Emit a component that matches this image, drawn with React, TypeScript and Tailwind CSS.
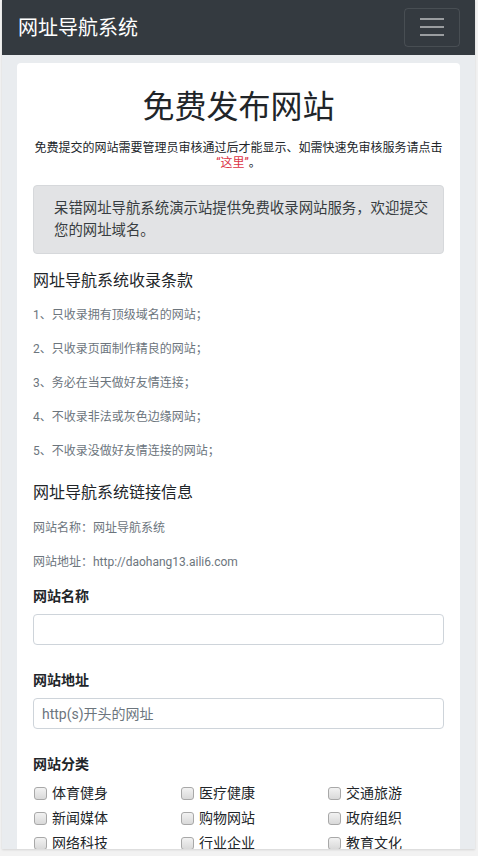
const rules = [
  "1、只收录拥有顶级域名的网站；",
  "2、只收录页面制作精良的网站；",
  "3、务必在当天做好友情连接；",
  "4、不收录非法或灰色边缘网站；",
  "5、不收录没做好友情连接的网站；",
];

const categories = [
  "体育健身",
  "医疗健康",
  "交通旅游",
  "新闻媒体",
  "购物网站",
  "政府组织",
  "网络科技",
  "行业企业",
  "教育文化",
];

function Checkbox({ label }: { label: string }) {
  return (
    <label className="w-1/3 px-[15px] flex items-center h-[21px] text-[14px] text-[#212529]">
      <span className="ml-[1px] w-[13px] h-[13px] rounded-[3px] border border-[#a8a8a8] bg-linear-to-b from-[#f2f2f2] to-[#d9d9d9]" />
      <span className="ml-[5px] leading-[21px]">{label}</span>
    </label>
  );
}

export default function App() {
  return (
    <div className="w-[478px] h-[856px] bg-[#f2f2f2] overflow-hidden font-['Roboto','Noto_Sans_CJK_SC',sans-serif]">
      <div className="ml-[2px] w-[473px] h-[849px] bg-[#e9ecef] overflow-hidden shadow-[0_1px_2px_rgba(0,0,0,0.12)]">
        <nav className="h-[55px] bg-[#343a40] flex items-center justify-between pl-[16px] pr-[15px]">
          <span className="text-[20px] leading-[30px] text-white">网址导航系统</span>
          <button className="w-[56px] h-[39px] -mt-[1px] border border-white/10 rounded flex flex-col items-center justify-center gap-[6px]">
            <span className="w-[24px] h-[2px] bg-white/50" />
            <span className="w-[24px] h-[2px] bg-white/50" />
            <span className="w-[24px] h-[2px] bg-white/50" />
          </button>
        </nav>

        <div className="px-[15px] pt-[8px]">
          <div className="bg-white rounded px-4 pt-[25px] pb-8 h-[900px]">
            <h1 className="text-[32px] leading-[38px] text-center text-[#212529]">免费发布网站</h1>
            <p className="mt-[15px] text-[12px] leading-[15px] text-center text-[#212529]">
              免费提交的网站需要管理员审核通过后才能显示、如需快速免审核服务请点击
              <br />
              <span className="text-[#dc3545]">“这里”</span>。
            </p>

            <div className="mt-[14px] bg-[#e2e3e5] border border-[#d6d8db] rounded px-5 py-3 text-[14.4px] leading-[21.6px] text-[#383d41]">
              <span className="whitespace-nowrap">呆错网址导航系统演示站提供免费收录网站服务，欢迎提交</span>
              <br />
              您的网址域名。
            </div>

            <h5 className="mt-[15px] text-[16px] leading-[24px] text-[#212529]">网址导航系统收录条款</h5>
            <div className="mt-[13px] flex flex-col gap-4">
              {rules.map((r) => (
                <p key={r} className="text-[12px] leading-[18px] text-[#6c757d]">
                  {r}
                </p>
              ))}
            </div>

            <h5 className="mt-[21px] text-[16px] leading-[24px] text-[#212529]">网址导航系统链接信息</h5>
            <div className="mt-[14px] flex flex-col gap-4">
              <p className="text-[12px] leading-[18px] text-[#6c757d]">网站名称：网址导航系统</p>
              <p className="text-[12px] leading-[18px] text-[#6c757d]">网站地址：http://daohang13.aili6.com</p>
            </div>

            <label className="block mt-[15px] text-[14px] leading-[21px] font-bold text-[#212529]">网站名称</label>
            <input
              type="text"
              className="block mt-[7px] w-full h-[31px] px-2 text-[14px] border border-[#ced4da] rounded outline-none"
            />

            <label className="block mt-[25px] text-[14px] leading-[21px] font-bold text-[#212529]">网站地址</label>
            <input
              type="text"
              placeholder="http(s)开头的网址"
              className="block mt-[7px] w-full h-[31px] px-2 text-[14px] border border-[#ced4da] rounded outline-none placeholder:text-[#6c757d]"
            />

            <label className="block mt-[25px] text-[14px] leading-[21px] font-bold text-[#212529]">网站分类</label>
            <div className="mt-[8px] -mx-[15px] flex flex-wrap gap-y-[4px]">
              {categories.map((c) => (
                <Checkbox key={c} label={c} />
              ))}
            </div>
          </div>
        </div>
      </div>
    </div>
  );
}
